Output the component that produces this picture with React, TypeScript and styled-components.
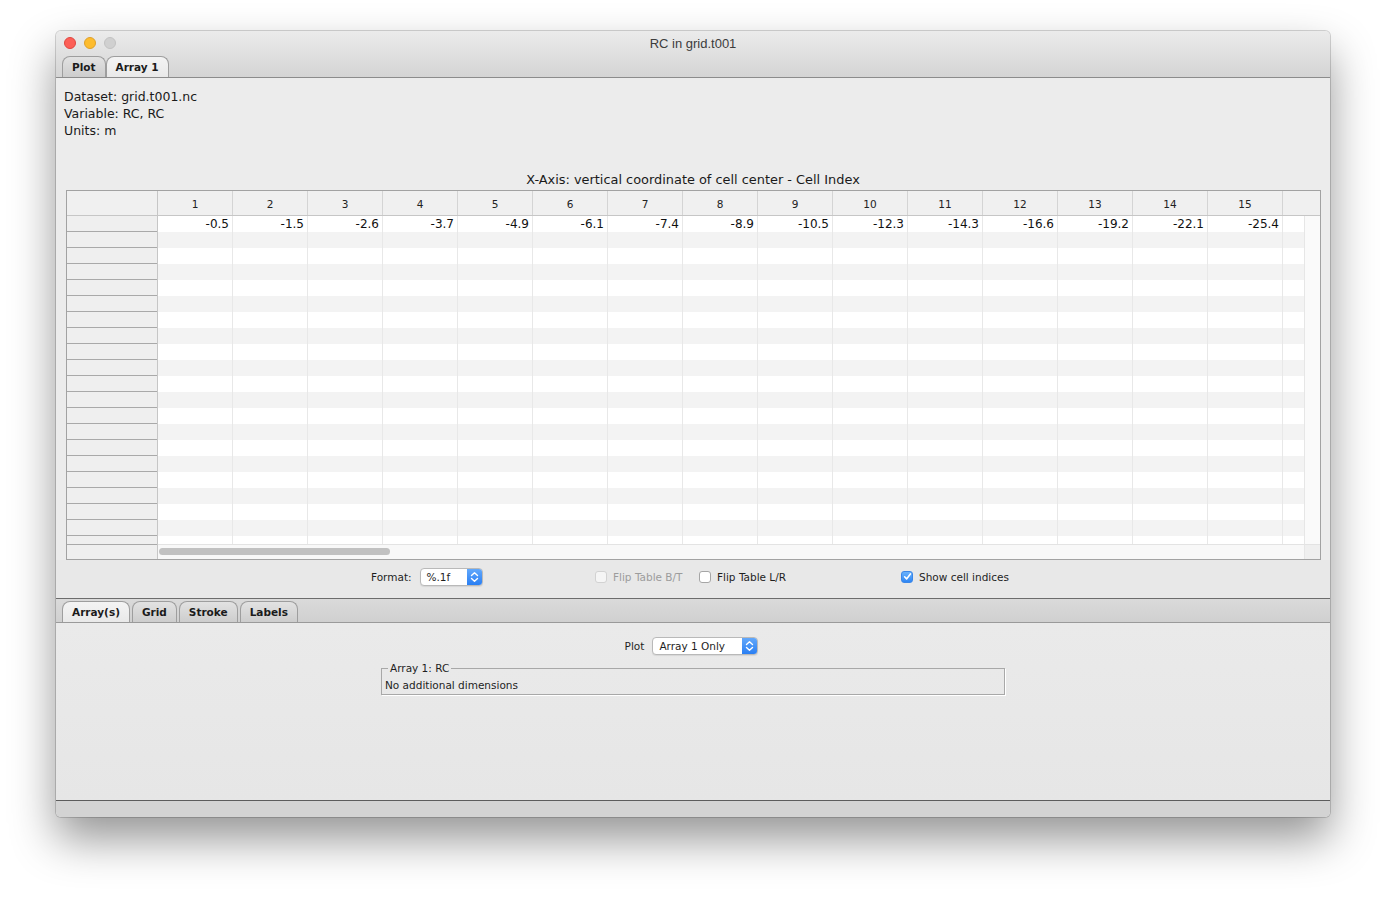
import styled, { createGlobalStyle } from 'styled-components';

const GlobalStyle = createGlobalStyle`
  html, body {
    margin: 0;
    padding: 0;
    background: #ffffff;
  }
  body {
    font-family: 'DejaVu Sans', 'Noto Sans', sans-serif;
    color: #1e1e1e;
  }
  * {
    box-sizing: border-box;
  }
`;

const Page = styled.div`
  width: 1386px;
  height: 898px;
  padding: 31px 0 0 56px;
  overflow: hidden;
`;

const Window = styled.div`
  width: 1274px;
  height: 786px;
  display: flex;
  flex-direction: column;
  border-radius: 5px;
  overflow: hidden;
  background: #ececec;
  box-shadow: 0 22px 45px rgba(0, 0, 0, 0.42), 0 0 0 1px rgba(0, 0, 0, 0.16);
`;

const TopChrome = styled.div`
  background: linear-gradient(#ebebeb, #d4d4d4);
  flex: none;
`;

const TitleBar = styled.div`
  height: 24px;
  display: grid;
  grid-template-columns: 1fr auto 1fr;
  align-items: center;
  padding: 0 8px;
`;

const Lights = styled.div`
  display: flex;
  gap: 8px;
`;

const Light = styled.span<{ $fill: string; $edge: string }>`
  width: 12px;
  height: 12px;
  border-radius: 50%;
  background: ${(p) => p.$fill};
  border: 1px solid ${(p) => p.$edge};
`;

const Title = styled.div`
  font-family: 'Liberation Sans', Arial, sans-serif;
  font-size: 13px;
  color: #3c3c3c;
`;

const TabStrip = styled.div<{ $lower?: boolean }>`
  height: ${(p) => (p.$lower ? '25px' : '23px')};
  display: flex;
  align-items: flex-end;
  gap: ${(p) => (p.$lower ? '2px' : '0')};
  padding-left: 6px;
  border-bottom: 1px solid ${(p) => (p.$lower ? '#9a9a9a' : '#8c8c8c')};
  ${(p) =>
    p.$lower
      ? `border-top: 1px solid #6c6c6c; background: linear-gradient(#dadada, #d0d0d0);`
      : ''}
`;

const Tab = styled.div<{ $active?: boolean }>`
  height: 21px;
  padding: 0 9px;
  display: flex;
  align-items: center;
  font-size: 10.5px;
  font-weight: 700;
  color: #1b1b1b;
  border: 1px solid #9e9e9e;
  border-bottom: none;
  border-radius: 8px 8px 0 0;
  background: ${(p) =>
    p.$active
      ? 'linear-gradient(#f4f4f4, #e9e9e9)'
      : 'linear-gradient(#e2e2e2, #cdcdcd)'};
`;

const UpperPanel = styled.div`
  height: 520px;
  flex: none;
  display: flex;
  flex-direction: column;
  background: #ececec;
`;

const Info = styled.div`
  padding: 10px 8px 0;
  font-size: 12.5px;
  line-height: 17px;
  color: #1a1a1a;
`;

const AxisTitle = styled.div`
  margin-top: 32px;
  text-align: center;
  font-size: 12.9px;
  line-height: 17px;
  color: #1a1a1a;
`;

const TableFrame = styled.div`
  margin: 2px 9px 0 10px;
  height: 370px;
  border: 1px solid #a2a2a2;
  background: #ffffff;
  display: flex;
  flex-direction: column;
`;

const HeaderRow = styled.div`
  height: 25px;
  flex: none;
  display: flex;
  background: #f0f0f0;
  border-bottom: 1px solid #c6c6c6;
`;

const Corner = styled.div`
  width: 91px;
  flex: none;
  border-right: 1px solid #c6c6c6;
`;

const ColHeader = styled.div`
  width: 75px;
  flex: none;
  border-right: 1px solid #d4d4d4;
  text-align: center;
  font-size: 10.5px;
  line-height: 26px;
  color: #222;
`;

const Filler = styled.div`
  flex: 1;
`;

const BodyArea = styled.div`
  flex: 1;
  display: flex;
  min-height: 0;
`;

const RowHeaderCol = styled.div`
  width: 91px;
  flex: none;
  display: flex;
  flex-direction: column;
  background: #efefef;
  border-right: 1px solid #c6c6c6;
`;

const RowHeaderViewport = styled.div`
  height: 328px;
  flex: none;
  overflow: hidden;
`;

const RowHeaderCell = styled.div`
  height: 16px;
  border-bottom: 1px solid #a9a9a9;
`;

const RowHeaderFooter = styled.div`
  flex: 1;
  border-top: 1px solid #a9a9a9;
`;

const Main = styled.div`
  flex: 1;
  display: flex;
  flex-direction: column;
`;

const RowsArea = styled.div`
  height: 328px;
  flex: none;
  display: flex;
`;

const Rows = styled.div`
  flex: 1;
  overflow: hidden;
`;

const Row = styled.div<{ $odd: boolean }>`
  height: 16px;
  display: flex;
  background: ${(p) => (p.$odd ? '#f3f3f3' : '#ffffff')};
`;

const Cell = styled.div`
  width: 75px;
  height: 16px;
  flex: none;
  border-right: 1px solid #e8e8e8;
  text-align: right;
  padding: 1px 3px 0 0;
  font-size: 12px;
  line-height: 15px;
  color: #111;
`;

const VTrack = styled.div`
  width: 16px;
  flex: none;
  background: #fafafa;
  border-left: 1px solid #e6e6e6;
`;

const HBar = styled.div`
  flex: 1;
  display: flex;
`;

const HTrack = styled.div`
  flex: 1;
  background: #f8f8f8;
  border-top: 1px solid #e3e3e3;
  padding: 3px 0 0 1px;
`;

const Thumb = styled.div`
  width: 231px;
  height: 7px;
  border-radius: 4px;
  background: #c1c1c1;
`;

const ScrollCorner = styled.div`
  width: 16px;
  flex: none;
  background: #efefef;
  border-top: 1px solid #e3e3e3;
  border-left: 1px solid #e6e6e6;
`;

const Controls = styled.div`
  flex: 1;
  display: grid;
  grid-template-columns: 224px 104px 202px auto;
  align-items: center;
  padding: 0 0 5px 315px;
  background: #e8e8e8;
  font-size: 10.5px;
  color: #1e1e1e;
`;

const FieldGroup = styled.div`
  display: flex;
  align-items: center;
  gap: 8px;
`;

const SelectBox = styled.div<{ $width: number }>`
  width: ${(p) => p.$width}px;
  height: 18px;
  display: flex;
  border: 1px solid #b9b9b9;
  border-radius: 4px;
  background: #ffffff;
  overflow: hidden;
  font-size: 10.5px;
  box-shadow: 0 1px 1px rgba(0, 0, 0, 0.08);
`;

const SelectText = styled.div`
  flex: 1;
  padding-left: 6px;
  line-height: 16px;
  color: #1e1e1e;
`;

const Stepper = styled.div`
  width: 15px;
  flex: none;
  background: linear-gradient(#62a8fb, #2a7ff3);
  display: flex;
  align-items: center;
  justify-content: center;
`;

const CheckRow = styled.label<{ $disabled?: boolean }>`
  display: flex;
  align-items: center;
  gap: 6px;
  color: ${(p) => (p.$disabled ? '#9c9c9c' : '#1e1e1e')};
`;

const Box = styled.span<{ $checked?: boolean; $disabled?: boolean }>`
  width: 12px;
  height: 12px;
  border-radius: 3px;
  display: flex;
  align-items: center;
  justify-content: center;
  border: 1px solid
    ${(p) => (p.$checked ? '#3b87e8' : p.$disabled ? '#d2d2d2' : '#a6a6a6')};
  background: ${(p) =>
    p.$checked
      ? 'linear-gradient(#6ab2fb, #2f86f4)'
      : p.$disabled
        ? '#f5f5f5'
        : '#ffffff'};
`;

const LowerPanel = styled.div`
  flex: 1;
  display: flex;
  flex-direction: column;
  align-items: center;
  padding-top: 14px;
  background: linear-gradient(#eaeaea, #e6e6e6);
  font-size: 10.5px;
`;

const PlotRow = styled.div`
  display: flex;
  align-items: center;
  gap: 8px;
  margin-left: -3px;
`;

const GroupBox = styled.fieldset`
  width: 624px;
  margin: 6px 0 0;
  padding: 2px 3px 1px;
  border: 1px solid #a8a8a8;
  box-shadow: 1px 1px 0 #ffffff;
  font-size: 10.5px;
  line-height: 15px;
  color: #1e1e1e;
`;

const Legend = styled.legend`
  padding: 0 2px;
  margin-left: 3px;
`;

const StatusBar = styled.div`
  height: 17px;
  flex: none;
  border-top: 1px solid #5c5c5c;
  background: #d3d3d3;
`;

const StepperIcon = () => (
  <svg width="9" height="12" viewBox="0 0 9 12">
    <path
      d="M1.5 4.5 L4.5 1.8 L7.5 4.5 M1.5 7.5 L4.5 10.2 L7.5 7.5"
      fill="none"
      stroke="#ffffff"
      strokeWidth="1.4"
      strokeLinecap="round"
      strokeLinejoin="round"
    />
  </svg>
);

const Select = ({ value, width }: { value: string; width: number }) => (
  <SelectBox $width={width}>
    <SelectText>{value}</SelectText>
    <Stepper>
      <StepperIcon />
    </Stepper>
  </SelectBox>
);

const Checkbox = ({
  label,
  checked,
  disabled,
}: {
  label: string;
  checked?: boolean;
  disabled?: boolean;
}) => (
  <CheckRow $disabled={disabled}>
    <Box $checked={checked} $disabled={disabled}>
      {checked && (
        <svg width="9" height="9" viewBox="0 0 9 9">
          <path
            d="M1.6 4.8 L3.6 6.9 L7.4 1.9"
            fill="none"
            stroke="#ffffff"
            strokeWidth="1.6"
            strokeLinecap="round"
            strokeLinejoin="round"
          />
        </svg>
      )}
    </Box>
    {label}
  </CheckRow>
);

const values = [
  '-0.5', '-1.5', '-2.6', '-3.7', '-4.9', '-6.1', '-7.4', '-8.9',
  '-10.5', '-12.3', '-14.3', '-16.6', '-19.2', '-22.1', '-25.4',
];

const rowCount = 21;

export default function App() {
  return (
    <Page>
      <GlobalStyle />
      <Window>
        <TopChrome>
          <TitleBar>
            <Lights>
              <Light $fill="#fc5f57" $edge="#e0463f" />
              <Light $fill="#fdbc2e" $edge="#dfa02a" />
              <Light $fill="#d0d0d0" $edge="#c2c2c2" />
            </Lights>
            <Title>RC in grid.t001</Title>
            <div />
          </TitleBar>
          <TabStrip>
            <Tab>Plot</Tab>
            <Tab $active>Array 1</Tab>
          </TabStrip>
        </TopChrome>

        <UpperPanel>
          <Info>
            <div>Dataset: grid.t001.nc</div>
            <div>Variable: RC, RC</div>
            <div>Units: m</div>
          </Info>
          <AxisTitle>X-Axis: vertical coordinate of cell center - Cell Index</AxisTitle>
          <TableFrame>
            <HeaderRow>
              <Corner />
              {values.map((_, i) => (
                <ColHeader key={i}>{i + 1}</ColHeader>
              ))}
              <Filler />
            </HeaderRow>
            <BodyArea>
              <RowHeaderCol>
                <RowHeaderViewport>
                  {Array.from({ length: rowCount }).map((_, i) => (
                    <RowHeaderCell key={i} />
                  ))}
                </RowHeaderViewport>
                <RowHeaderFooter />
              </RowHeaderCol>
              <Main>
                <RowsArea>
                  <Rows>
                    {Array.from({ length: rowCount }).map((_, r) => (
                      <Row key={r} $odd={r % 2 === 1}>
                        {values.map((v, c) => (
                          <Cell key={c}>{r === 0 ? v : ''}</Cell>
                        ))}
                      </Row>
                    ))}
                  </Rows>
                  <VTrack />
                </RowsArea>
                <HBar>
                  <HTrack>
                    <Thumb />
                  </HTrack>
                  <ScrollCorner />
                </HBar>
              </Main>
            </BodyArea>
          </TableFrame>
          <Controls>
            <FieldGroup>
              Format:
              <Select value="%.1f" width={63} />
            </FieldGroup>
            <Checkbox label="Flip Table B/T" disabled />
            <Checkbox label="Flip Table L/R" />
            <Checkbox label="Show cell indices" checked />
          </Controls>
        </UpperPanel>

        <TabStrip $lower>
          <Tab $active>Array(s)</Tab>
          <Tab>Grid</Tab>
          <Tab>Stroke</Tab>
          <Tab>Labels</Tab>
        </TabStrip>

        <LowerPanel>
          <PlotRow>
            Plot
            <Select value="Array 1 Only" width={106} />
          </PlotRow>
          <GroupBox>
            <Legend>Array 1: RC</Legend>
            No additional dimensions
          </GroupBox>
        </LowerPanel>

        <StatusBar />
      </Window>
    </Page>
  );
}
